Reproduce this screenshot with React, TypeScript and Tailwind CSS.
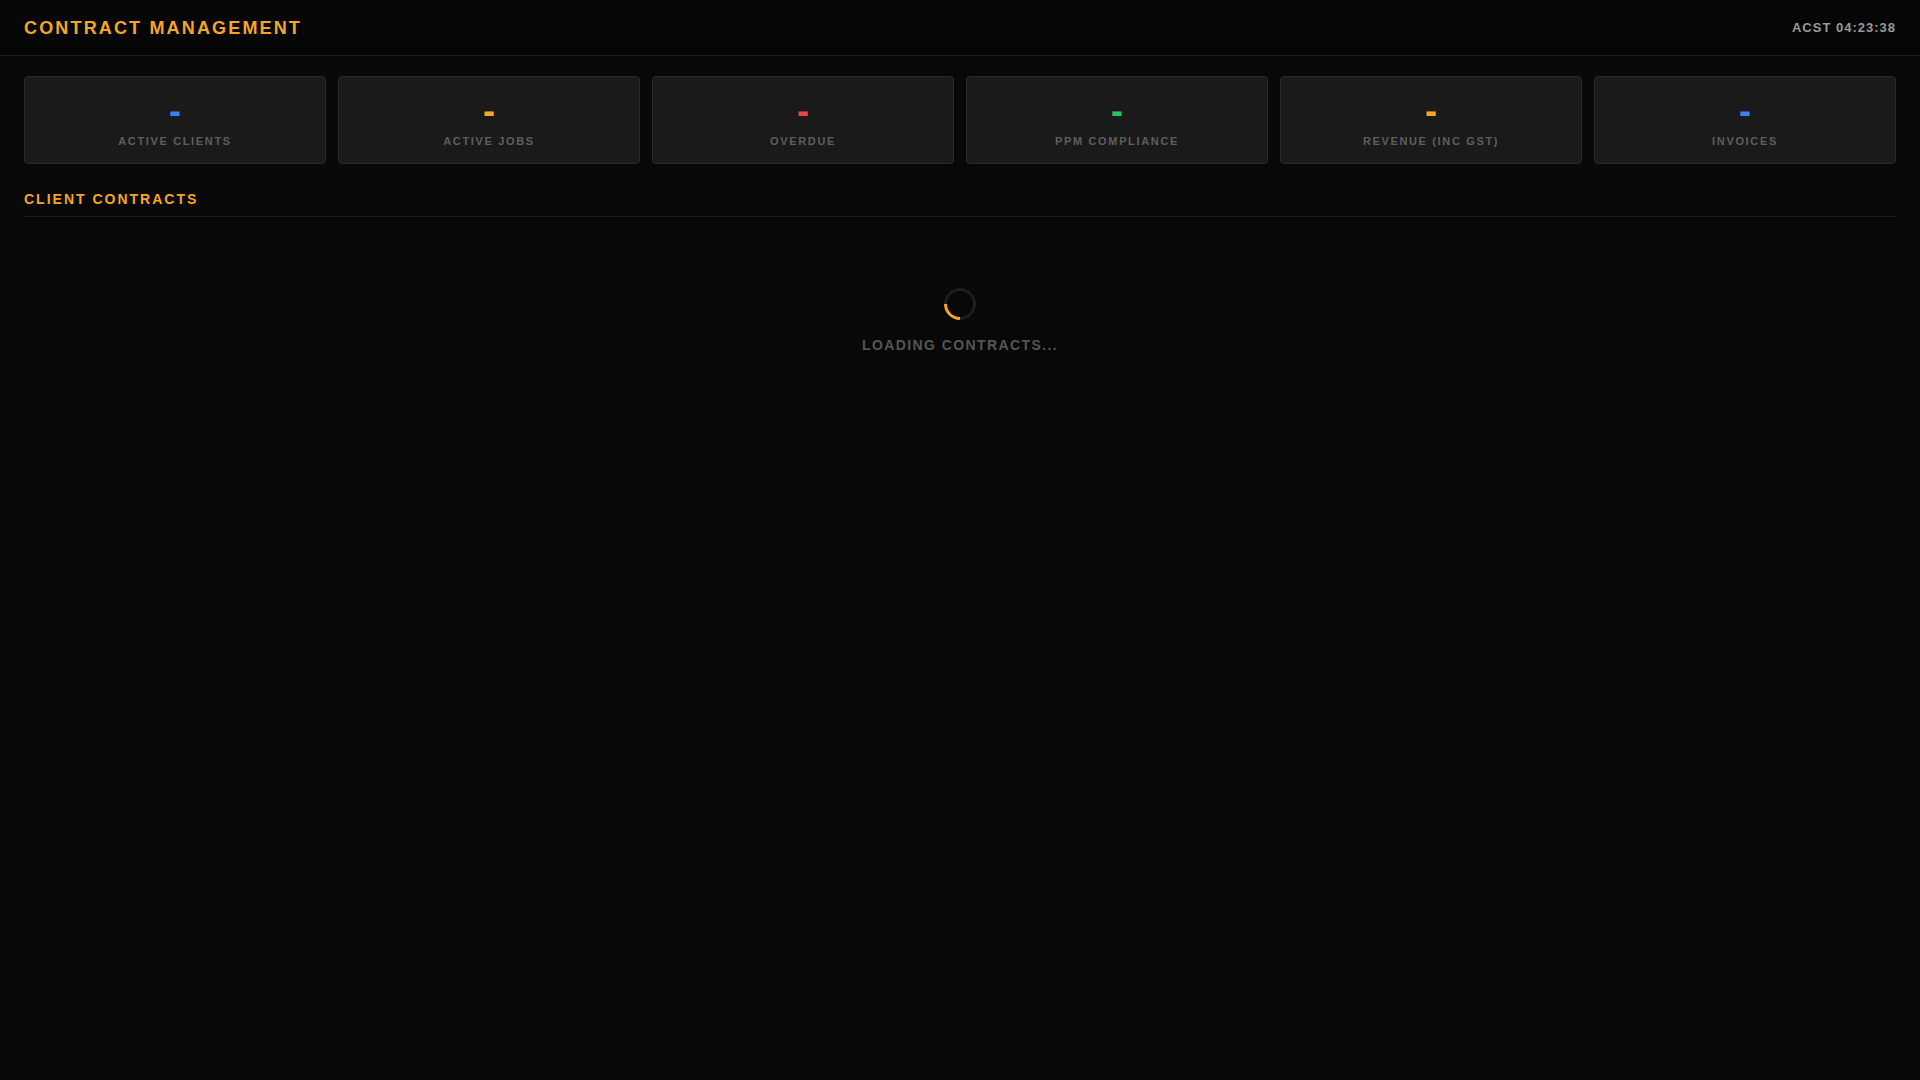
import React from "react";

const stats = [
  { label: "ACTIVE CLIENTS", color: "text-[#3b82f6]" },
  { label: "ACTIVE JOBS", color: "text-[#f5a623]" },
  { label: "OVERDUE", color: "text-[#ef4444]" },
  { label: "PPM COMPLIANCE", color: "text-[#22c55e]" },
  { label: "REVENUE (INC GST)", color: "text-[#f5a623]" },
  { label: "INVOICES", color: "text-[#3b82f6]" },
];

export default function App() {
  return (
    <div
      className="min-h-screen w-full bg-[#080808]"
      style={{ fontFamily: '"Liberation Sans", Arial, sans-serif' }}
    >
      <header className="flex h-[56px] items-center justify-between border-b border-[#1c1c1c] bg-[#060606] px-6">
        <h1 className="text-[18px] font-bold leading-none tracking-[0.12em] text-[#f5a623]">
          CONTRACT MANAGEMENT
        </h1>
        <div className="text-[13px] font-bold leading-none tracking-[1px] text-[#999999]">
          ACST 04:23:38
        </div>
      </header>

      <main className="px-6 pt-[20px]">
        <div className="grid grid-cols-6 gap-3">
          {stats.map((s) => (
            <div
              key={s.label}
              className="flex h-[88px] flex-col items-center justify-center rounded-[4px] border border-[#2a2a2a] bg-[#1a1a1a] pb-[1px]"
            >
              <div className={`text-[36px] font-bold leading-[36px] ${s.color}`}>-</div>
              <div className="mt-[7px] text-[11px] font-bold leading-none tracking-[0.15em] text-[#5e5e5e]">
                {s.label}
              </div>
            </div>
          ))}
        </div>

        <div className="mt-[26px] border-b border-[#1c1c1c] pb-[8px]">
          <h2 className="text-[14px] font-bold leading-[18px] tracking-[2px] text-[#f5a623]">
            CLIENT CONTRACTS
          </h2>
        </div>

        <div className="flex flex-col items-center pt-[71px]">
          <div className="h-[32px] w-[32px] -rotate-45 rounded-full border-[3px] border-[#1e1e1e] border-l-[#f5a623]" />
          <div className="mt-[15px] text-[14px] font-bold leading-[20px] tracking-[0.1em] text-[#555555]">
            LOADING CONTRACTS...
          </div>
        </div>
      </main>
    </div>
  );
}
